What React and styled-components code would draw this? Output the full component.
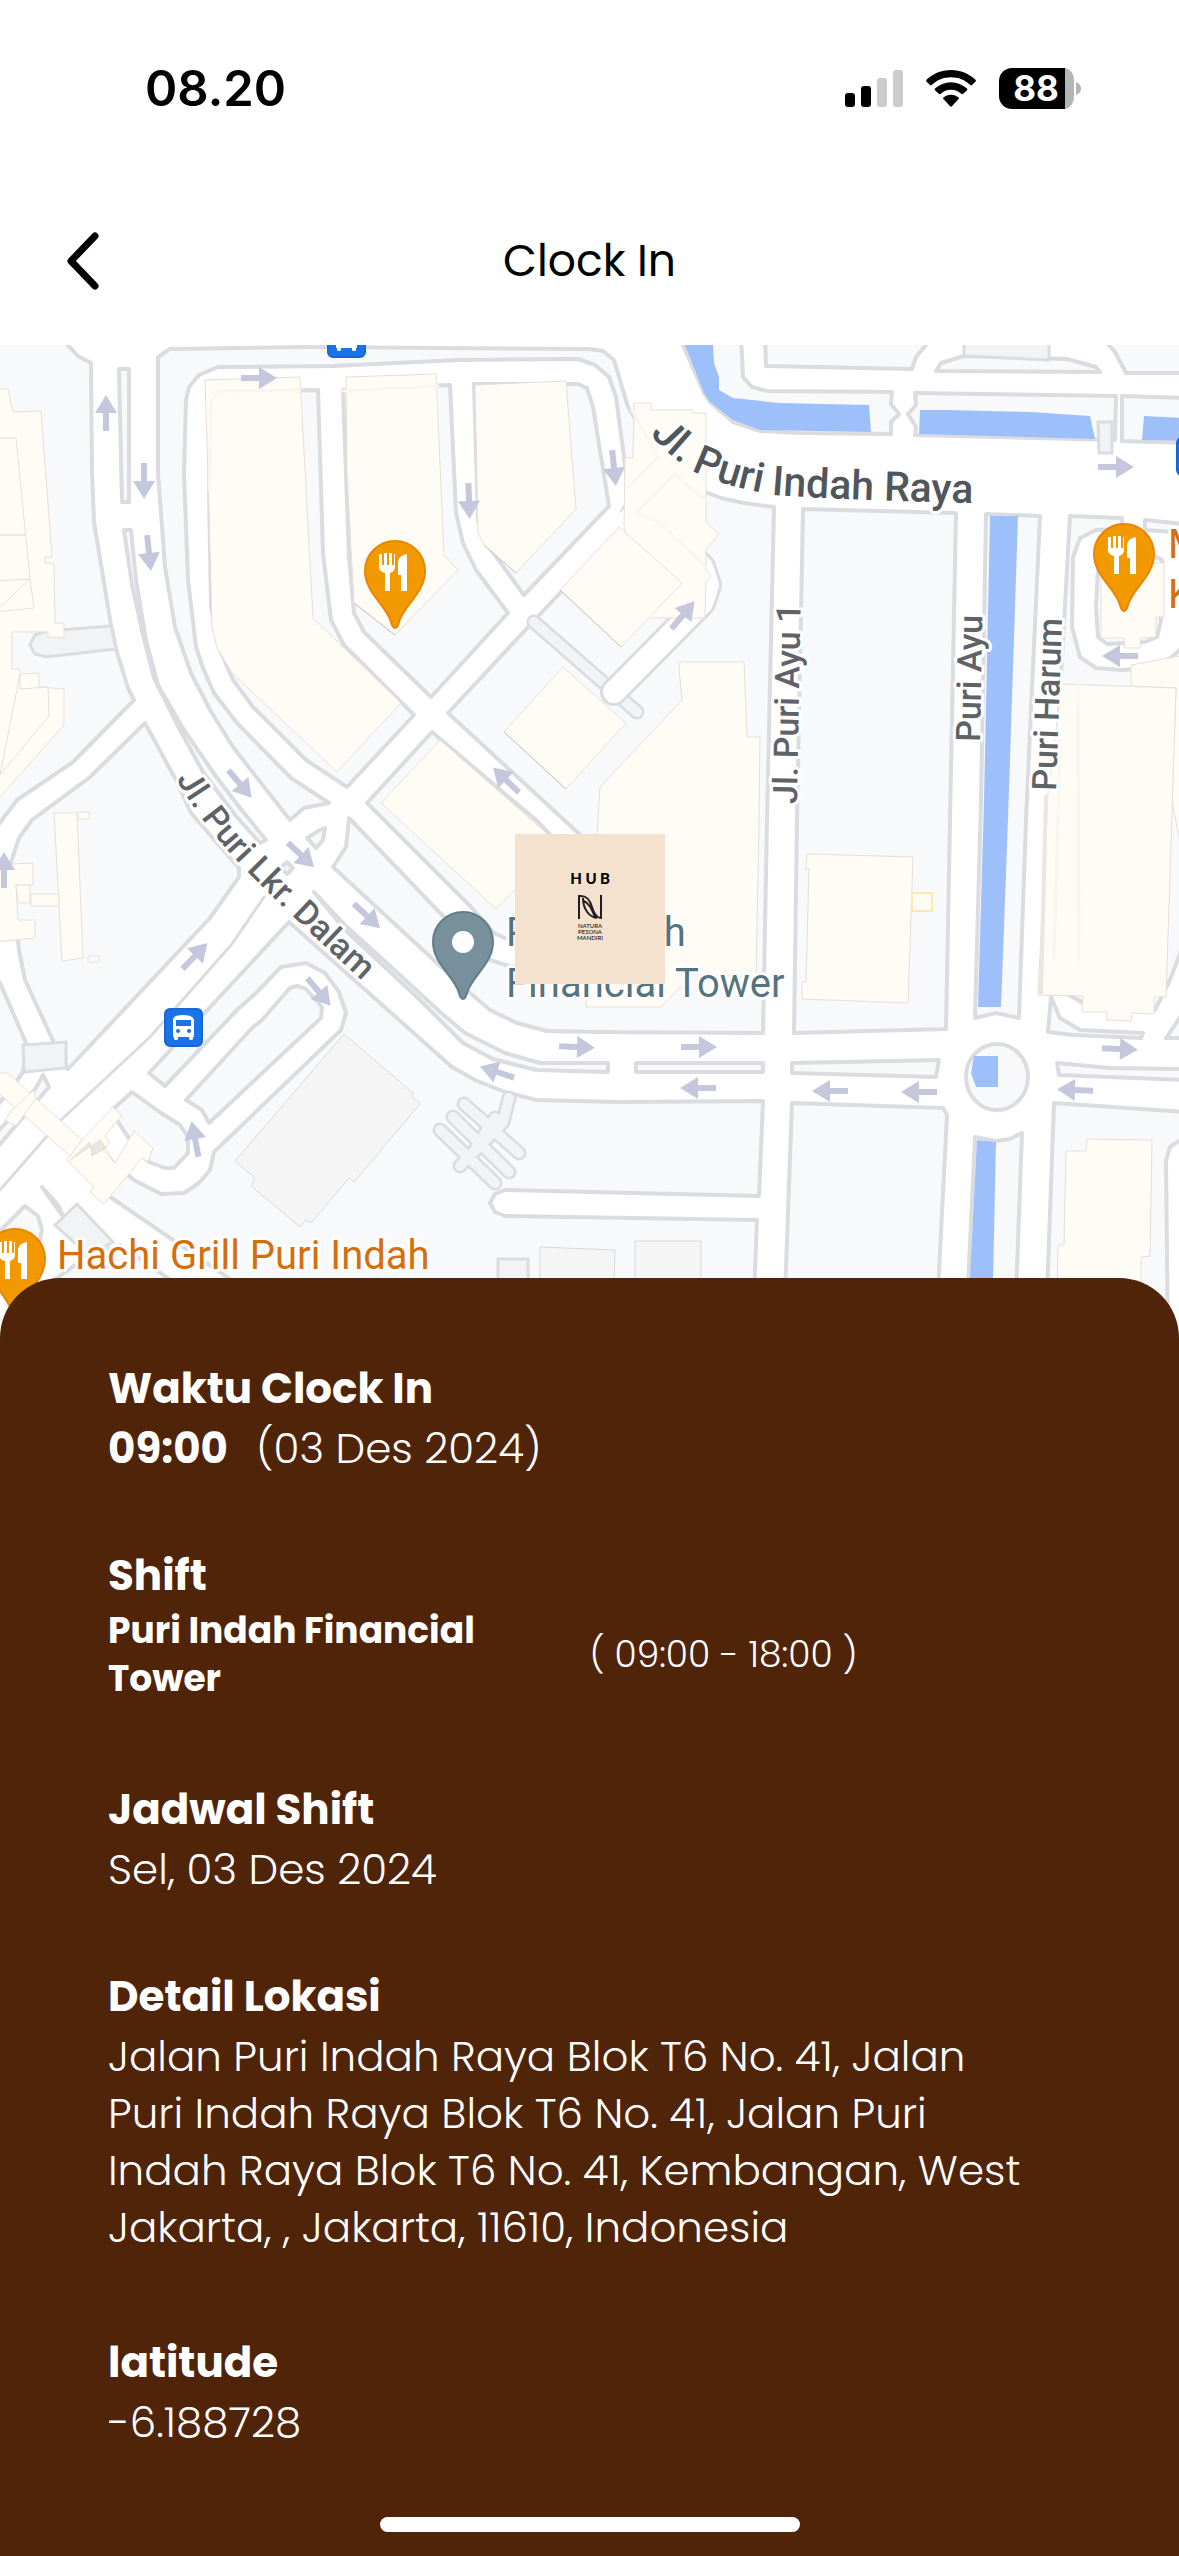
import React from "react";
import styled, { createGlobalStyle } from "styled-components";

const GlobalStyle = createGlobalStyle`
  *, *::before, *::after { box-sizing: border-box; }
  body {
    margin: 0;
    background: #fff;
    font-family: Poppins, Inter, "Liberation Sans", sans-serif;
    color: #000;
  }
`;

const Page = styled.div`
  display: flex;
  flex-direction: column;
  min-height: 100vh;
`;

const StatusBar = styled.div`
  display: flex;
  align-items: center;
  justify-content: space-between;
  height: 177px;
  padding: 0 98px 0 145px;
`;

const Time = styled.time`
  font: 600 49px/60px Inter, sans-serif;
`;

const StatusIcons = styled.div`
  display: flex;
  align-items: center;
  gap: 23px;
`;

const TopBar = styled.header`
  display: grid;
  grid-template-columns: 64px 1fr 64px;
  align-items: center;
  height: 168px;
  padding: 0 50px;
`;

const BackButton = styled.button`
  display: flex;
  align-items: center;
  justify-content: center;
  width: 64px;
  height: 80px;
  padding: 0;
  border: 0;
  background: none;
  cursor: pointer;
`;

const Title = styled.h1`
  margin: 0;
  font-size: 44px;
  font-weight: 400;
  line-height: 66px;
  text-align: center;
`;

const MapArea = styled.main`
  line-height: 0;
  overflow: hidden;

  svg { width: 100%; height: auto; }
`;

const Sheet = styled.section`
  position: relative;
  display: flex;
  flex: 1;
  flex-direction: column;
  margin-top: -67px;
  padding: 82px 108px 24px;
  border-radius: 60px 60px 0 0;
  background: #502409;
  color: #fff;
`;

const Details = styled.dl`
  display: flex;
  flex-direction: column;
  gap: 70px;
  margin: 0;
`;

const Group = styled.div`
  display: flex;
  flex-direction: column;
  gap: 3px;
  padding-bottom: ${(p) => (p.$roomy ? "8px" : "0")};
`;

const Label = styled.dt`
  font-size: 42px;
  font-weight: 700;
  line-height: 57px;
`;

const Value = styled.dd`
  display: flex;
  align-items: center;
  gap: 28px;
  margin: 0;
  padding-right: 40px;
  font-size: 42px;
  font-weight: 300;
  line-height: 57px;
`;

const Strong = styled.strong`
  font-weight: 700;
`;

const ShiftRow = styled.dd`
  display: grid;
  grid-template-columns: 1fr 1fr;
  align-items: center;
  margin: 0;
  font-size: 36px;
  font-weight: 300;
  line-height: 48px;
`;

const ShiftPlace = styled.strong`
  padding-right: 80px;
  font-weight: 700;
`;

const HomeIndicator = styled.div`
  align-self: center;
  width: 420px;
  height: 15px;
  margin-top: auto;
  border-radius: 8px;
  background: #fff;
`;

const BlockShape = styled.polygon`
  fill: #f8f9fb;
  stroke: #dadce0;
  stroke-width: 4;
  stroke-linejoin: round;
`;

const PavedShape = styled.polygon`
  fill: #f1f3f4;
  stroke: #dadce0;
  stroke-width: 3;
`;

const BuildingShape = styled.polygon`
  fill: ${(p) => (p.$grey ? "#f5f5f5" : "#fffcf5")};
  stroke: ${(p) => (p.$grey ? "#d9d9d9" : "#e6dfd7")};
  stroke-width: 1;
`;

const RoadLine = styled.polyline`
  fill: none;
  stroke: ${(p) => p.$color};
  stroke-width: ${(p) => p.$width};
  stroke-linecap: round;
  stroke-linejoin: round;
`;

const MapLabel = styled.text`
  font-family: Roboto, "Liberation Sans", sans-serif;
  font-size: ${(p) => p.$size}px;
  font-weight: ${(p) => p.$weight || 400};
  fill: ${(p) => p.$color};
  stroke: #fff;
  stroke-width: 6;
  stroke-linejoin: round;
  paint-order: stroke;
`;

const LogoText = styled.text`
  font-family: Lato, sans-serif;
  font-size: ${(p) => p.$size}px;
  font-weight: ${(p) => p.$weight};
  text-anchor: middle;
`;

const blocks = [
  "63,340 78,356 91,363 92,473 94,522 111,625 116,649 128,688 134,700 73,762 17,800 2,820 -5,830 -5,340",
  "145,723 90,777 32,820 19,838 10,865 19,950 25,980 54,1043 68,1069 210,918 239,877 239,868 191,813 176,780",
  "-5,975 0,983 27,1045 23,1072 12,1088 -5,1108",
  "43,1075 49,1087 -5,1150 -5,1135 36,1088",
  "289,922 149,1073 165,1086 237,1010 256,993 281,967 306,963 325,973 339,992 346,1013 341,1030 214,1152 210,1170 199,1183 184,1193 161,1194 134,1180 110,1160 100,1190 230,1279 300,1350 752,1350 757,1220 505,1216 495,1212 490,1203 495,1194 505,1190 759,1196 763,1101 620,1102 536,1100 505,1092 475,1080 452,1067",
  "186,1100 252,1028 262,1020 290,988 297,986 306,989 322,1007 321,1018 209,1123 202,1110",
  "132,1092 161,1113 180,1125 188,1137 188,1153 174,1168 165,1168 149,1162 135,1148 117,1120 112,1110",
  "25,1206 38,1216 42,1230 40,1240 -5,1270 -5,1236",
  "42,1187 58,1205 64,1218",
  "88,1256 120,1245 185,1290 100,1290 40,1290",
  "314,892 345,925 400,975 440,1012 465,1033 505,1053 540,1063 608,1063 608,1072 536,1070 493,1059 463,1043 420,1000 345,930",
  "119,369 129,369 129,502 122,502",
  "124,530 131,530 136,580 146,640 158,685 184,730 215,775 240,808 266,840 260,843 235,815 203,772 180,730 154,678 143,635 132,585",
  "158,357 170,349 306,347 589,349 603,351 614,360 628,407 658,457 628,487 616,397 609,377 595,365 578,359 459,360 333,366 218,367 199,375 189,387 186,400 184,473 188,580 196,647 203,668 214,693 237,723 291,778 329,803 304,808 290,820 233,747 210,710 191,673 175,627 165,567 158,473",
  "318,390 218,391 210,396 209,402 209,490 211,607 220,650 233,680 253,707 306,760 347,787 414,715 344,645 331,620 323,553",
  "343,390 450,385 456,513 463,543 476,570 508,613 431,697 364,632 354,613 349,557",
  "474,384 578,384 587,388 593,407 609,506 524,595 484,540 478,520",
  "628,520 448,713 589,843 600,967 509,966 490,960 444,917 349,818 346,847 333,867 463,987 490,1010 517,1023 547,1031 600,1032 763,1033 767,820 774,507 744,503 721,498 695,488 675,474 637,512",
  "432,732 536,820 570,855 570,955 509,940 494,933 471,907 367,803",
  "320,830 325,828 323,840 316,848 307,838",
  "287,862 293,868 287,874 281,868",
  "683,345 704,393 710,402 733,422 760,431 800,433 891,434 891,422 899,414 891,404 892,392 767,391 752,387 743,377 741,335 680,335",
  "765,335 766,366 912,369 916,357 926,345 926,335",
  "936,371 1100,372 1096,367 1067,359 964,356 941,363",
  "1100,335 1115,352 1126,373 1185,373 1185,335",
  "915,393 1116,396 1115,440 915,435 916,427 908,414 916,405",
  "1122,396 1185,398 1185,443 1122,441",
  "803,509 956,513 950,820 946,1029 794,1033 797,820",
  "986,514 1040,516 1026,820 1019,1018 996,1013 975,1018 981,800",
  "1070,516 1122,518 1122,529 1096,530 1080,538 1073,557 1072,627 1080,657 1096,668 1122,670 1153,668 1172,657 1185,645 1185,940 1170,980 1155,1010 1090,1008 1078,1000 1051,985 1044,900 1054,800",
  "1051,997 1048,1032 1073,1035 1141,1038 1143,1033 1080,1030 1060,1018",
  "1185,1010 1166,1038 1185,1038",
  "1145,520 1185,524 1185,533 1145,530",
  "1110,555 1098,567 1096,607 1098,637 1107,644 1145,642 1157,637 1161,620 1162,560 1153,555",
  "636,1063 763,1063 763,1072 636,1072",
  "792,1063 939,1060 936,1077 792,1073",
  "1057,1063 1110,1068 1185,1069 1185,1080 1059,1075",
  "792,1103 943,1108 947,1115 935,1350 783,1350",
  "975,1137 996,1141 1010,1139 1022,1133 1014,1350 965,1350",
  "1054,1103 1185,1112 1185,1137 1170,1147 1166,1160 1168,1350 1045,1350",
];

const paved = [
  "111,626 46,631 35,635 30,645 35,654 46,657 116,649",
  "23,1045 66,1042 66,1068 24,1072",
  "77,1204 55,1225 88,1255 113,1242",
  "498,1259 528,1259 528,1350 498,1350",
  "964,335 1049,335 1049,360 964,356",
  "1098,422 1112,422 1112,453 1099,453",
];

const water = [
  "685,345 713,345 714,363 719,377 719,390 733,398 779,403 869,405 871,432 760,430 733,420 710,402 704,393",
  "920,410 947,410 1031,412 1090,416 1095,439 919,434",
  "1144,416 1185,418 1185,441 1142,440",
  "990,516 1018,516 1008,820 1001,1007 978,1007 984,800",
  "977,1140 996,1142 993,1280 992,1350 967,1350 970,1277",
];

const buildings = [
  "205,380 300,377 313,618 401,703 337,772 232,673 217,648 212,627 209,507",
  "346,377 436,374 444,555 458,570 395,635 354,603 347,473",
  "475,385 566,381 576,509 516,573 484,545 478,533",
  "634,403 651,403 651,410 693,410 693,413 706,413 706,522 719,534 706,550 706,570 711,576 706,582 705,618 649,618 624,528 625,458 633,458",
  "619,527 682,583 621,647 560,590",
  "563,667 626,723 566,789 504,732",
  "440,740 381,803 496,909 560,845",
  "680,662 744,662 747,737 760,737 759,820 756,977 693,974 661,1007 586,1007 598,820 600,787 682,700 679,668",
  "807,854 913,857 908,1003 802,999 802,982 806,982 809,869 806,869",
  "1131,686 1131,665 1185,655 1185,870 1172,800 1176,688",
  "1062,684 1176,688 1166,997 1154,997 1154,1014 1132,1013 1131,1021 1107,1020 1107,1012 1082,1012 1083,996 1038,995 1048,793",
  "1101,563 1164,563 1164,617 1156,617 1156,637 1141,638 1140,648 1125,648 1124,638 1101,638",
  "1087,1139 1152,1140 1150,1256 1141,1257 1141,1350 1056,1350 1058,1245 1064,1245 1066,1151 1086,1151",
  "-5,389 8,389 13,412 41,411 52,557 45,557 45,563 54,563 55,623 64,623 64,638 48,637 48,632 12,632 12,669 19,669 21,674 39,673 39,687 64,689 64,725 0,797 -5,800",
  "-5,438 16,438 30,579 -5,581",
  "-5,535 25,535",
  "30,579 34,608 -5,612",
  "20,674 20,689 48,687 49,716 0,775",
  "54,813 77,813 83,958 62,961",
  "78,812 89,812 89,819 78,819",
  "88,956 99,956 99,962 88,962",
  "31,894 59,894 59,906 31,906",
  "-5,865 33,863 33,885 16,885 18,920 35,920 35,938 -5,942",
  "16,885 30,885 30,903 18,903",
  "-5,1073 8,1073 82,1140 70,1156 -5,1090",
  "5,1120 12,1110 34,1090 36,1098 16,1126",
  "113,1107 122,1115 105,1136 110,1142 103,1150 115,1163 134,1131 153,1148 148,1162 142,1158 104,1204 90,1192 94,1187 67,1160 82,1140",
];

const greyBuildings = [
  "344,1034 413,1093 412,1096 420,1104 354,1182 349,1178 311,1223 306,1220 300,1227 251,1186 255,1178 235,1161",
  "635,1241 701,1241 701,1350 635,1350",
  "540,1247 615,1250 612,1350 539,1350",
];

const faintEdges = [
  "209,490 211,402 218,391 300,390",
  "343,391 438,386",
  "632,410 658,457 628,487",
  "706,500 690,488 675,474 637,512 660,523 706,567",
  "1078,684 1079,960",
  "1060,740 1054,960",
];

const parkingLanes = [
  "509,1098 503,1122 460,1166",
  "495,1118 487,1130 475,1150",
  "464,1104 519,1153",
  "453,1117 509,1172",
  "440,1130 495,1183",
];

const arrows = [
  [106, 413, 270], [144, 481, 90], [149, 553, 84], [259, 378, 0],
  [469, 501, 88], [614, 468, 84], [1116, 467, 0], [1120, 656, 180],
  [683, 615, -50], [240, 784, 50], [506, 780, 224], [301, 855, 43],
  [367, 916, 43], [195, 956, -46], [4, 870, 270], [319, 992, 50],
  [577, 1047, 2], [497, 1072, 198], [195, 1139, 259], [699, 1047, 0],
  [698, 1088, 180], [830, 1091, 180], [919, 1092, 180], [1075, 1090, 182],
  [1120, 1049, 2],
];

const pinShape =
  "M0 57C-2 57 -3 55 -4 51C-8 35 -30 22 -30 0A30 30 0 0 1 30 0C30 22 8 35 4 51C3 55 2 57 0 57Z";

function FoodPin({ x, y }) {
  return (
    <g transform={`translate(${x} ${y})`}>
      <path d={pinShape} fill="#f29900" stroke="#e98500" strokeWidth="2" />
      <path
        fill="#fff"
        d="M-16 -17h3v11h2v-12h3v12h2v-12h3v12h2v-11h1v14q-1 4 -5 5v18h-5v-18q-5 -1 -6 -5zM12 -17v37h-6v-16h-3v-13q1 -7 9 -8z"
      />
    </g>
  );
}

function PlacePin({ x, y }) {
  return (
    <g transform={`translate(${x} ${y})`}>
      <path d={pinShape} fill="#78909c" stroke="#5f7d8b" strokeWidth="2" />
      <circle r="11" fill="#fff" />
    </g>
  );
}

function BusStop({ x, y }) {
  return (
    <g transform={`translate(${x} ${y})`}>
      <rect x="1" y="1" width="37" height="37" rx="5" fill="#1a73e8" stroke="#1967d2" strokeWidth="2" />
      <path
        fill="#fff"
        fillRule="evenodd"
        d="M9 12q0 -5 10 -5t11 5v17h-1v2q0 1 -2 1t-2 -1v-2h-11v2q0 1 -2 1t-2 -1v-2h-1zM12 12v6h15v-6zM14 21a2 2 0 1 0 .1 0zM25 21a2 2 0 1 0 .1 0z"
      />
    </g>
  );
}

function Marker() {
  return (
    <g>
      <rect x="515" y="834" width="150" height="150" fill="#f4e2ce" />
      <LogoText $size={15} $weight={900} x="576" y="884">H</LogoText>
      <LogoText $size={15} $weight={900} x="591" y="884">U</LogoText>
      <LogoText $size={15} $weight={900} x="605" y="884">B</LogoText>
      <path
        d="M579 919V896C587 895 590 900 592 907S597 918 601 918V895M583 898C583 909 589 917 597 918M584 901C590 904 592 910 595 917"
        fill="none"
        stroke="#231f20"
        strokeWidth="2"
      />
      <LogoText $size={6} $weight={400} x="590" y="928">NATURA</LogoText>
      <LogoText $size={6} $weight={400} x="590" y="934">PESONA</LogoText>
      <LogoText $size={6} $weight={400} x="590" y="940">MANDIRI</LogoText>
    </g>
  );
}

function StreetMap() {
  return (
    <svg viewBox="0 345 1179 1000" role="img" aria-label="Peta lokasi">
      <rect x="0" y="345" width="1179" height="1000" fill="#fff" />
      {blocks.map((p) => <BlockShape key={p} points={p} />)}
      {water.map((p) => <polygon key={p} points={p} fill="#9dc0fa" />)}
      {paved.map((p) => <PavedShape key={p} points={p} />)}

      <ellipse cx="997" cy="1077" rx="31" ry="33" fill="#f8f9fb" stroke="#dadce0" strokeWidth="4" />
      <path d="M974 1056h24v31h-22l-5 -14z" fill="#9dc0fa" />

      <RoadLine points="264,897 232,944 150,1037 61,1120 0,1190" $color="#dadce0" $width={3} />
      <RoadLine points="534,622 637,712" $color="#dadce0" $width={15} />
      <RoadLine points="534,622 637,712" $color="#f1f3f4" $width={10} />
      <RoadLine points="633,516 660,527 702,567 708,585 702,603 614,692" $color="#dadce0" $width={28} />
      <RoadLine points="625,523 633,516 660,527 702,567 708,585 702,603 614,692" $color="#fff" $width={22} />

      {parkingLanes.map((p) => <RoadLine key={p} points={p} $color="#dadce0" $width={15} />)}
      {parkingLanes.map((p) => <RoadLine key={p} points={p} $color="#f1f3f4" $width={10} />)}

      {buildings.map((p) => <BuildingShape key={p} points={p} />)}
      {greyBuildings.map((p) => <BuildingShape key={p} points={p} $grey />)}
      {faintEdges.map((p) => <RoadLine key={p} points={p} $color="#fbf4ef" $width={3} />)}
      <path d="M70 1160l20 -18l2 14l14 -8l-6 -8zM104 1147l10 14" fill="#eae5df" stroke="#e6dfd7" />
      <path d="M484 545l32 28M354 603l41 32M560 590l61 57M504 732l62 57" stroke="#c9c4bd" fill="none" />
      <path d="M1046 795L1041 994" stroke="#ebe6e0" strokeWidth="4" fill="none" />
      <rect x="912" y="893" width="20" height="18" fill="#fffcf5" stroke="#fde8b0" strokeWidth="2" />

      {arrows.map(([x, y, angle]) => (
        <path
          key={`${x}-${y}`}
          transform={`translate(${x} ${y}) rotate(${angle})`}
          d="M-18 -3H0V-11L18 0L0 11V3H-18Z"
          fill="#c5c8dc"
        />
      ))}

      <defs>
        <path id="raya" d="M650 434Q672 460 697 473Q730 488 775 495Q840 500 1010 504" />
        <path id="dalam" d="M176 779Q202 824 240 864Q290 916 390 1006" />
      </defs>
      <MapLabel $size={41} $weight={500} $color="#50565c">
        <textPath href="#raya">Jl. Puri Indah Raya</textPath>
      </MapLabel>
      <MapLabel $size={34} $weight={500} $color="#5f6368">
        <textPath href="#dalam">Jl. Puri Lkr. Dalam</textPath>
      </MapLabel>
      <MapLabel $size={34} $weight={500} $color="#5f6368" transform="translate(797 804) rotate(-89)">Jl. Puri Ayu 1</MapLabel>
      <MapLabel $size={34} $weight={500} $color="#5f6368" transform="translate(980 742) rotate(-89)">Puri Ayu</MapLabel>
      <MapLabel $size={34} $weight={500} $color="#5f6368" transform="translate(1056 791) rotate(-88)">Puri Harum</MapLabel>

      <MapLabel $size={40} $color="#567380" x="506" y="946">Puri Indah</MapLabel>
      <MapLabel $size={40} $color="#567380" x="506" y="997">Financial Tower</MapLabel>
      <MapLabel $size={40} $color="#d56e0c" x="57" y="1269">Hachi Grill Puri Indah</MapLabel>
      <MapLabel $size={40} $color="#d56e0c" x="1168" y="558">M</MapLabel>
      <MapLabel $size={40} $color="#d56e0c" x="1168" y="608">K</MapLabel>

      <FoodPin x={395} y={571} />
      <FoodPin x={1124} y={554} />
      <FoodPin x={15} y={1259} />
      <PlacePin x={463} y={942} />
      <BusStop x={164} y={1008} />
      <BusStop x={327} y={319} />
      <BusStop x={1176} y={437} />
      <Marker />
    </svg>
  );
}

function SignalIcon() {
  return (
    <svg width="58" height="38" viewBox="0 0 58 38" aria-hidden="true">
      <rect x="0" y="23" width="10" height="14" rx="3" />
      <rect x="16" y="16" width="10" height="21" rx="3" />
      <rect x="32" y="8" width="10" height="29" rx="3" fill="#ccc" />
      <rect x="48" y="0" width="10" height="37" rx="3" fill="#ccc" />
    </svg>
  );
}

function WifiIcon() {
  return (
    <svg width="50" height="38" viewBox="0 0 50 38" aria-hidden="true">
      <path d="M25 0C34.500 0 43 3.600 49.500 9.800Q50.300 10.600 49.500 11.500L46 15Q45.200 15.800 44.300 15C39 10 32.500 7.300 25 7.300S11 10 5.700 15Q4.800 15.800 4 15L.5 11.500Q-.3 10.600 .5 9.800C7 3.600 15.500 0 25 0Z" />
      <path d="M25 12.300C31 12.300 36.600 14.600 41 18.600Q41.800 19.400 41 20.200L37.300 23.800Q36.500 24.600 35.600 23.900C32.600 21.300 29 19.700 25 19.700S17.400 21.300 14.400 23.900Q13.500 24.600 12.700 23.800L9 20.200Q8.200 19.400 9 18.600C13.400 14.600 19 12.300 25 12.300Z" />
      <path d="M25 24.700C28 24.700 30.600 25.800 32.600 27.500Q33.400 28.300 32.600 29.100L25.900 36.200Q25 37.100 24.100 36.200L17.400 29.100Q16.600 28.300 17.400 27.500C19.400 25.800 22 24.700 25 24.700Z" />
    </svg>
  );
}

const BatteryText = styled.text`
  font: 700 35px Inter, sans-serif;
  fill: #fff;
  text-anchor: middle;
`;

function BatteryIcon() {
  return (
    <svg width="82" height="41" viewBox="0 0 82 41" role="img" aria-label="88%">
      <path d="M66 0A11 12 0 0 1 75 13V28A11 12 0 0 1 66 41Z" fill="#b5b5b5" />
      <path d="M13 0H66V41H13A13 13 0 0 1 0 28V13A13 13 0 0 1 13 0Z" />
      <path d="M77 14Q82 16 82 20.500T77 27Z" fill="#b5b5b5" />
      <BatteryText x="37" y="33">88</BatteryText>
    </svg>
  );
}

export default function App() {
  return (
    <Page>
      <GlobalStyle />
      <StatusBar>
        <Time>08.20</Time>
        <StatusIcons>
          <SignalIcon />
          <WifiIcon />
          <BatteryIcon />
        </StatusIcons>
      </StatusBar>
      <TopBar>
        <BackButton type="button" aria-label="Kembali">
          <svg width="34" height="58" viewBox="0 0 34 58" aria-hidden="true">
            <path d="M30 4L6 29L30 54" fill="none" stroke="#000" strokeWidth="7" strokeLinecap="round" strokeLinejoin="round" />
          </svg>
        </BackButton>
        <Title>Clock In</Title>
      </TopBar>
      <MapArea>
        <StreetMap />
      </MapArea>
      <Sheet>
        <Details>
          <Group>
            <Label>Waktu Clock In</Label>
            <Value><Strong>09:00</Strong><span>(03 Des 2024)</span></Value>
          </Group>
          <Group $roomy>
            <Label>Shift</Label>
            <ShiftRow>
              <ShiftPlace>Puri Indah Financial Tower</ShiftPlace>
              <span>( 09:00 - 18:00 )</span>
            </ShiftRow>
          </Group>
          <Group>
            <Label>Jadwal Shift</Label>
            <Value>Sel, 03 Des 2024</Value>
          </Group>
          <Group $roomy>
            <Label>Detail Lokasi</Label>
            <Value>
              Jalan Puri Indah Raya Blok T6 No. 41, Jalan Puri Indah Raya Blok T6 No. 41, Jalan Puri Indah Raya
              Blok T6 No. 41, Kembangan, West Jakarta, , Jakarta, 11610, Indonesia
            </Value>
          </Group>
          <Group>
            <Label>latitude</Label>
            <Value>-6.188728</Value>
          </Group>
        </Details>
        <HomeIndicator />
      </Sheet>
    </Page>
  );
}
